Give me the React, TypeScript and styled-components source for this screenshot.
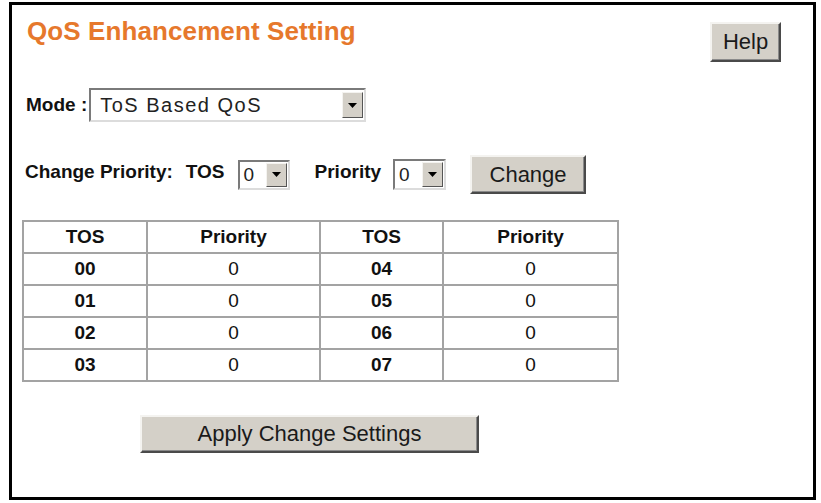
import React from "react";
import styled, { createGlobalStyle } from "styled-components";

const Global = createGlobalStyle`
  html, body { margin: 0; padding: 0; background: #ffffff; }
  body { font-family: "Liberation Sans", Arial, sans-serif; color: #111; }
`;

const Frame = styled.div`
  box-sizing: border-box;
  width: 807px;
  height: 498px;
  margin: 2px 0 0 9px;
  border: 3px solid #000;
  padding: 11px 32px 0 10px;
  display: flex;
  flex-direction: column;
  align-items: flex-start;
  background: #fff;
`;

const Header = styled.div`
  display: flex;
  justify-content: space-between;
  align-items: flex-start;
  align-self: stretch;
`;

const Title = styled.h1`
  margin: 0 0 0 5px;
  font-size: 26px;
  line-height: 30px;
  font-weight: bold;
  letter-spacing: 0.1px;
  color: #e6782c;
`;

const Button = styled.button<{ $w: number; $h: number }>`
  box-sizing: border-box;
  width: ${(p) => p.$w}px;
  height: ${(p) => p.$h}px;
  padding: 0;
  background: #d4d0c8;
  border-top: 2px solid #f4f3f0;
  border-left: 2px solid #f4f3f0;
  border-right: 2px solid #4a4a4a;
  border-bottom: 2px solid #4a4a4a;
  box-shadow: inset -1px -1px 0 #8a8a8a;
  font-family: "Liberation Sans", Arial, sans-serif;
  font-size: 22px;
  color: #1a1a1a;
  cursor: pointer;
`;

const HelpButton = styled(Button)`
  margin-top: 6px;
`;

const Row = styled.div<{ $mt: number; $ml: number }>`
  display: flex;
  align-items: center;
  margin-top: ${(p) => p.$mt}px;
  margin-left: ${(p) => p.$ml}px;
`;

const Label = styled.span<{ $mr: number; $up?: number }>`
  font-size: 19px;
  font-weight: bold;
  color: #111;
  margin-right: ${(p) => p.$mr}px;
  position: relative;
  top: ${(p) => -(p.$up || 0)}px;
`;

const SelectBox = styled.div<{ $w: number; $h: number; $inset: number }>`
  box-sizing: border-box;
  width: ${(p) => p.$w}px;
  height: ${(p) => p.$h}px;
  display: flex;
  align-items: stretch;
  background: #fff;
  border-top: 2px solid #7a7a7a;
  border-left: 2px solid #7a7a7a;
  border-right: 2px solid #dcdcdc;
  border-bottom: 2px solid #dcdcdc;
  padding: ${(p) => p.$inset}px 1px ${(p) => p.$inset}px 0;
`;

const SelectText = styled.span<{ $pl: number; $size: number; $ls: number }>`
  flex: 1;
  display: flex;
  align-items: center;
  padding-left: ${(p) => p.$pl}px;
  font-size: ${(p) => p.$size}px;
  letter-spacing: ${(p) => p.$ls}px;
  color: #222;
  white-space: nowrap;
`;

const ArrowButton = styled.span`
  box-sizing: border-box;
  width: 21px;
  display: flex;
  align-items: center;
  justify-content: center;
  background: #d4d0c8;
  border-top: 1px solid #f4f3f0;
  border-left: 1px solid #f4f3f0;
  border-right: 1px solid #555;
  border-bottom: 1px solid #555;
`;

const Arrow = () => (
  <svg width="9" height="5" viewBox="0 0 9 5">
    <path d="M0 0 H9 L4.5 5 Z" fill="#000" />
  </svg>
);

type SelectProps = { value: string; w: number; h: number; inset: number; pl: number; size: number; ls: number };

const FakeSelect = ({ value, w, h, inset, pl, size, ls }: SelectProps) => (
  <SelectBox $w={w} $h={h} $inset={inset}>
    <SelectText $pl={pl} $size={size} $ls={ls}>{value}</SelectText>
    <ArrowButton>
      <Arrow />
    </ArrowButton>
  </SelectBox>
);

const Spacer = styled.span<{ $w: number }>`
  display: inline-block;
  width: ${(p) => p.$w}px;
`;

const Table = styled.table`
  margin-top: 26px;
  width: 595px;
  border-collapse: collapse;
  table-layout: fixed;
  font-size: 19px;
`;

const Cell = styled.td<{ $bold?: boolean }>`
  height: 30px;
  padding: 0;
  border: 2px solid #a3a3a3;
  text-align: center;
  vertical-align: middle;
  font-weight: ${(p) => (p.$bold ? "bold" : "normal")};
  color: #111;
`;

const HeadCell = styled.th`
  height: 30px;
  padding: 0;
  border: 2px solid #a3a3a3;
  text-align: center;
  font-weight: bold;
  color: #111;
`;

const ApplyButton = styled(Button)`
  margin-top: 33px;
  margin-left: 118px;
`;

const rows = [
  ["00", "0", "04", "0"],
  ["01", "0", "05", "0"],
  ["02", "0", "06", "0"],
  ["03", "0", "07", "0"],
];

export default function App() {
  return (
    <>
      <Global />
      <Frame>
        <Header>
          <Title>QoS Enhancement Setting</Title>
          <HelpButton $w={71} $h={40}>Help</HelpButton>
        </Header>

        <Row $mt={26} $ml={4}>
          <Label $mr={2} $up={0}>Mode :</Label>
          <FakeSelect value="ToS Based QoS" w={277} h={34} inset={2} pl={9} size={20} ls={1.5} />
        </Row>

        <Row $mt={33} $ml={3}>
          <Label $mr={13} $up={3}>Change Priority:</Label>
          <Label $mr={13} $up={3}>TOS</Label>
          <FakeSelect value="0" w={52} h={30} inset={1} pl={4} size={19} ls={0} />
          <Spacer $w={25} />
          <Label $mr={12} $up={3}>Priority</Label>
          <FakeSelect value="0" w={53} h={31} inset={1} pl={4} size={19} ls={0} />
          <Spacer $w={24} />
          <Button $w={116} $h={39}>Change</Button>
        </Row>

        <Table>
          <colgroup>
            <col style={{ width: 124 }} />
            <col style={{ width: 173 }} />
            <col style={{ width: 123 }} />
            <col style={{ width: 175 }} />
          </colgroup>
          <thead>
            <tr>
              <HeadCell>TOS</HeadCell>
              <HeadCell>Priority</HeadCell>
              <HeadCell>TOS</HeadCell>
              <HeadCell>Priority</HeadCell>
            </tr>
          </thead>
          <tbody>
            {rows.map((r) => (
              <tr key={r[0]}>
                <Cell $bold>{r[0]}</Cell>
                <Cell>{r[1]}</Cell>
                <Cell $bold>{r[2]}</Cell>
                <Cell>{r[3]}</Cell>
              </tr>
            ))}
          </tbody>
        </Table>

        <ApplyButton $w={339} $h={38}>Apply Change Settings</ApplyButton>
      </Frame>
    </>
  );
}
